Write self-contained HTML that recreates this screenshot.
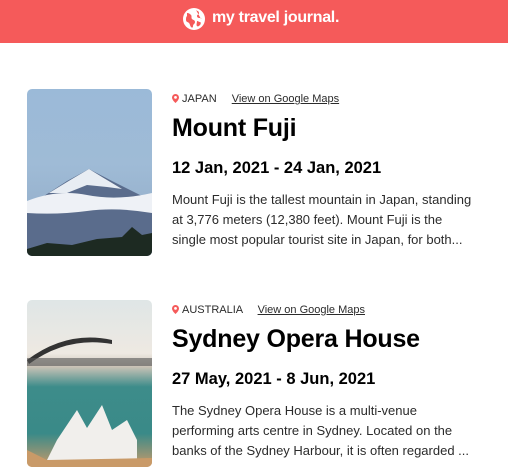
<!DOCTYPE html>
<html><head><style>
*{margin:0;padding:0;box-sizing:border-box}
body{width:508px;height:469px;overflow:hidden;background:#fff;font-family:"Liberation Sans",sans-serif;position:relative}
.hdr{position:absolute;left:0;top:0;width:508px;height:43px;background:#F55A5A}
.hdr .t{position:absolute;left:212px;top:9px;color:#fff;font-weight:bold;font-size:16px;letter-spacing:-0.3px}
.card{position:absolute;left:0;width:508px}
.img{position:absolute;left:27px;top:0;width:125px;height:167px;border-radius:5px;overflow:hidden}
.loc{position:absolute;left:172px;top:4px;font-size:11px;color:#2b2b2b;white-space:nowrap}
.loc a{color:#2b2b2b;text-decoration:underline;margin-left:12px}
.pin{display:inline-block;width:7px;height:9px;vertical-align:-1px;margin-right:3px}
h1{position:absolute;left:172px;top:25px;font-size:25px;font-weight:bold;color:#000;white-space:nowrap;letter-spacing:-0.2px}
h2{position:absolute;left:172px;top:70px;font-size:16.5px;font-weight:bold;color:#000;white-space:nowrap}
p{position:absolute;left:172px;top:101px;font-size:13px;line-height:20px;color:#2b2b2b;white-space:nowrap}
</style></head><body>
<div class="hdr">
<svg style="position:absolute;left:182px;top:7px" width="24" height="24" viewBox="0 0 24 24"><circle cx="12" cy="12" r="11" fill="#fff"/><path d="M5 6c2 0 3 1 4 2s0 3 1 4 3 1 3 3-2 2-2 4-1 2-2 1-1-3-2-4-3-1-3-3 0-3 1-4z M14 3c1 1 3 1 3 3s-2 1-2 3 2 2 3 2 2 1 2 3c0 1 0-3-1-2" fill="#F55A5A"/><path d="M15 14c1 0 2 1 3 1s1 2 0 3-2 2-3 1 0-3 0-5z" fill="#F55A5A"/></svg>
<div class="t">my travel journal.</div>
</div>

<div class="card" style="top:89px">
<div class="img" style="background:linear-gradient(#9bbad8 0%,#9fbbd6 45%,#8fa8c4 100%)">
<svg width="125" height="167" viewBox="0 0 125 167"><path d="M0 118 L40 92 L62 80 L85 92 L125 112 L125 167 L0 167z" fill="#5a6c8c"/><path d="M22 104 L45 90 L62 80 L75 88 L95 100 L80 98 L60 96 L40 104z" fill="#e8edf3"/><path d="M0 112 Q30 100 60 106 T125 104 L125 124 Q90 118 60 122 T0 124z" fill="#eef1f6"/><path d="M0 160 L20 154 L45 156 L70 150 L95 148 L105 138 L115 146 L125 144 L125 167 L0 167z" fill="#1d2a22"/></svg>
</div>
<div class="loc"><svg class="pin" viewBox="0 0 7 9"><path d="M3.5 0A3.5 3.5 0 0 0 0 3.5C0 6 3.5 9 3.5 9S7 6 7 3.5A3.5 3.5 0 0 0 3.5 0zm0 2a1.4 1.4 0 1 1 0 2.8a1.4 1.4 0 0 1 0-2.8z" fill="#F55A5A"/></svg>JAPAN <a>View on Google Maps</a></div>
<h1>Mount Fuji</h1>
<h2>12 Jan, 2021 - 24 Jan, 2021</h2>
<p>Mount Fuji is the tallest mountain in Japan, standing<br>at 3,776 meters (12,380 feet). Mount Fuji is the<br>single most popular tourist site in Japan, for both...</p>
</div>

<div class="card" style="top:300px">
<div class="img" style="background:linear-gradient(#dfe6e6 0%,#eee9e2 32%,#c9c2b6 40%,#3d8c8a 52%,#3a8a88 80%,#c89a6a 100%)">
<svg width="125" height="167" viewBox="0 0 125 167"><path d="M0 60 Q40 30 85 40 L85 44 Q40 36 2 64z" fill="#333"/><path d="M0 58 L125 58 L125 66 L0 66z" fill="#555" opacity=".6"/><path d="M30 140 L50 110 L60 128 L75 105 L85 130 L100 120 L110 140 L110 160 L20 160z" fill="#f1efec"/><path d="M0 150 L20 160 L125 158 L125 167 L0 167z" fill="#c99a68"/></svg>
</div>
<div class="loc"><svg class="pin" viewBox="0 0 7 9"><path d="M3.5 0A3.5 3.5 0 0 0 0 3.5C0 6 3.5 9 3.5 9S7 6 7 3.5A3.5 3.5 0 0 0 3.5 0zm0 2a1.4 1.4 0 1 1 0 2.8a1.4 1.4 0 0 1 0-2.8z" fill="#F55A5A"/></svg>AUSTRALIA <a>View on Google Maps</a></div>
<h1>Sydney Opera House</h1>
<h2>27 May, 2021 - 8 Jun, 2021</h2>
<p>The Sydney Opera House is a multi-venue<br>performing arts centre in Sydney. Located on the<br>banks of the Sydney Harbour, it is often regarded ...</p>
</div>
</body></html>
